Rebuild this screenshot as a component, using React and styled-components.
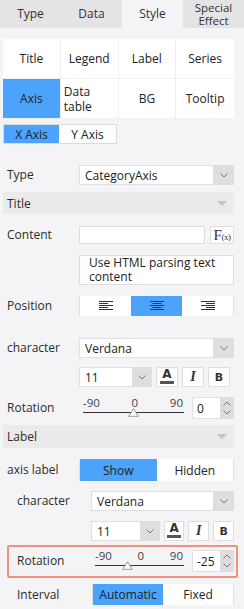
import styled, { createGlobalStyle } from "styled-components";

const GlobalStyle = createGlobalStyle`
  body {
    margin: 0;
    background: #f4f4f6;
    font-family: "Open Sans", "DejaVu Sans", sans-serif;
    font-size: 12px;
    color: #2b2b2b;
  }
  * { box-sizing: border-box; }
`;

const BLUE = "#4ba3fb";

function Chevron({ up }) {
  return (
    <svg width="8" height="5" viewBox="0 0 8 5">
      <polyline
        points={up ? "0.5,4.5 4,1 7.5,4.5" : "0.5,0.5 4,4 7.5,0.5"}
        fill="none"
        stroke="#777"
        strokeWidth="1"
      />
    </svg>
  );
}

function AlignIcon({ mode }) {
  const widths = [14, 9, 14, 9, 14];
  return (
    <svg width="14" height="10" viewBox="0 0 14 10">
      {widths.map((w, i) => {
        const x = mode === "left" ? 0 : mode === "right" ? 14 - w : (14 - w) / 2;
        return <rect key={i} x={x} y={i * 2} width={w} height="1" fill="#333" />;
      })}
    </svg>
  );
}

function Thumb() {
  return (
    <svg width="11" height="9" viewBox="0 0 11 9">
      <polygon points="5.5,0.8 10.3,8.3 0.7,8.3" fill="#fff" stroke="#999" strokeWidth="1" />
    </svg>
  );
}

function Slider({ value }) {
  const pct = ((value + 90) / 180) * 100;
  return (
    <SliderWrap>
      <Scale>
        <span>-90</span>
        <span>0</span>
        <span>90</span>
      </Scale>
      <Track />
      <ThumbHolder style={{ left: `${pct}%` }}>
        <Thumb />
      </ThumbHolder>
    </SliderWrap>
  );
}

function NumberBox({ value }) {
  return (
    <NumBox>
      <NumText>{value}</NumText>
      <Spinner>
        <Chevron up />
        <Chevron />
      </Spinner>
    </NumBox>
  );
}

function SelectBox({ value, arrowWidth, h }) {
  return (
    <Select $h={h}>
      <SelectText>{value}</SelectText>
      <SelectArrow $w={arrowWidth}>
        <Chevron />
      </SelectArrow>
    </Select>
  );
}

function FontTools({ indent, mt }) {
  return (
    <Row $mt={mt} $indent={indent}>
      <Label $indent={indent} />
      <SizeSelect>
        <SelectText>11</SelectText>
        <SelectArrow $w={20}>
          <Chevron />
        </SelectArrow>
      </SizeSelect>
      <ToolButton>
        <ColorA>
          A
          <ColorBar />
        </ColorA>
      </ToolButton>
      <ToolButton>
        <ItalicI>I</ItalicI>
      </ToolButton>
      <ToolButton>
        <BoldB>B</BoldB>
      </ToolButton>
    </Row>
  );
}

export default function App() {
  return (
    <Page>
      <GlobalStyle />
      <Tabs>
        <Tab>Type</Tab>
        <Tab>Data</Tab>
        <Tab $active>Style</Tab>
        <Tab>
          <TabLines>
            <span>Special</span>
            <span>Effect</span>
          </TabLines>
        </Tab>
      </Tabs>

      <Panel>
        <CategoryGrid>
          <Category>Title</Category>
          <Category>Legend</Category>
          <Category>Label</Category>
          <Category $last>Series</Category>
          <Category $active>Axis</Category>
          <Category>
            <span>Data table</span>
          </Category>
          <Category>BG</Category>
          <Category $last>Tooltip</Category>
        </CategoryGrid>

        <AxisSwitch>
          <AxisButton $w={55} $active>X Axis</AxisButton>
          <AxisButton $w={57}>Y Axis</AxisButton>
        </AxisSwitch>

        <Row $mt={21}>
          <Label>Type</Label>
          <SelectBox value="CategoryAxis" arrowWidth={21} />
        </Row>

        <Section $mt={7}>
          <span>Title</span>
          <Caret />
        </Section>

        <Row $mt={12}>
          <Label>Content</Label>
          <TextInput />
          <FxButton>
            F<small>(x)</small>
          </FxButton>
        </Row>

        <Row $mt={11}>
          <Label />
          <HtmlBox>Use HTML parsing text content</HtmlBox>
        </Row>

        <Row $mt={11}>
          <Label>Position</Label>
          <Segmented $h={20}>
            <Segment>
              <AlignIcon mode="left" />
            </Segment>
            <Segment $active>
              <AlignIcon mode="center" />
            </Segment>
            <Segment>
              <AlignIcon mode="right" />
            </Segment>
          </Segmented>
        </Row>

        <Row $mt={22}>
          <Label>character</Label>
          <SelectBox value="Verdana" arrowWidth={21} />
        </Row>

        <FontTools mt={9} />

        <Row $mt={10}>
          <Label>Rotation</Label>
          <Slider value={0} />
          <NumberBox value="0" />
        </Row>

        <Section $mt={6} $h={23}>
          <span>Label</span>
          <Caret />
        </Section>

        <Row $mt={11}>
          <Label>axis label</Label>
          <Segmented $h={22}>
            <Segment $active>Show</Segment>
            <Segment>Hidden</Segment>
          </Segmented>
        </Row>

        <Row $mt={10} $indent>
          <Label $indent>character</Label>
          <SelectBox value="Verdana" arrowWidth={21} />
        </Row>

        <FontTools indent mt={10} />

        <Highlight>
          <Label $indent>Rotation</Label>
          <Slider value={-25} />
          <NumberBox value="-25" />
        </Highlight>

        <Row $mt={6} $indent>
          <Label $indent>Interval</Label>
          <Segmented $h={21} $ml={1}>
            <Segment $active>Automatic</Segment>
            <Segment>Fixed</Segment>
          </Segmented>
        </Row>
      </Panel>
    </Page>
  );
}

const Page = styled.div`
  width: 244px;
  min-height: 609px;
  background: #f4f4f6;
`;

const Tabs = styled.div`
  display: grid;
  grid-template-columns: repeat(4, 1fr);
  height: 28px;
  background: #e4e4e4;
`;

const Tab = styled.div`
  display: flex;
  align-items: center;
  justify-content: center;
  text-align: center;
  font-size: 12px;
  line-height: 14px;
  color: #333;
  background: ${(p) => (p.$active ? "#f4f4f6" : "transparent")};
`;

const TabLines = styled.div`
  display: flex;
  flex-direction: column;
  align-items: center;
  font-size: 11.5px;
  line-height: 13px;
`;

const Panel = styled.div`
  padding: 0 10px 4px 3px;
`;

const CategoryGrid = styled.div`
  margin-top: 11px;
  display: grid;
  grid-template-columns: repeat(4, 1fr);
  grid-auto-rows: 40px;
  background: #fff;
`;

const Category = styled.div`
  display: flex;
  align-items: center;
  justify-content: center;
  padding: 0 3px;
  line-height: 15px;
  font-size: 12px;
  color: #222;
  border-right: ${(p) => (p.$last ? "none" : "1px solid #eeeeee")};
  border-bottom: 1px solid #eeeeee;
  background: ${(p) => (p.$active ? BLUE : "#fff")};
`;

const AxisSwitch = styled.div`
  margin-top: 5px;
  display: inline-flex;
  border: 1px solid #dcdcdc;
  height: 20px;
`;

const AxisButton = styled.div`
  width: ${(p) => p.$w}px;
  display: flex;
  align-items: center;
  justify-content: center;
  font-size: 12px;
  background: ${(p) => (p.$active ? BLUE : "#fff")};
  color: #222;
`;

const Row = styled.div`
  display: flex;
  align-items: center;
  margin-top: ${(p) => p.$mt}px;
  padding-left: ${(p) => (p.$indent ? 14 : 4)}px;
`;

const Label = styled.div`
  width: ${(p) => (p.$indent ? 74 : 72)}px;
  flex-shrink: 0;
  font-size: 12px;
  line-height: 14px;
  color: #2b2b2b;
`;

const Select = styled.div`
  flex: 1;
  display: flex;
  height: ${(p) => p.$h || 20}px;
  background: #fff;
  border: 1px solid #e0e0e0;
`;

const SelectText = styled.div`
  flex: 1;
  display: flex;
  align-items: center;
  padding-left: 5px;
  font-size: 12px;
  color: #222;
`;

const SelectArrow = styled.div`
  width: ${(p) => p.$w}px;
  display: flex;
  align-items: center;
  justify-content: center;
  background: #dedede;
  margin: -1px -1px -1px 0;
`;

const Section = styled.div`
  margin-top: ${(p) => p.$mt}px;
  height: ${(p) => p.$h || 22}px;
  display: flex;
  align-items: center;
  justify-content: space-between;
  padding: 0 7px 0 4px;
  background: #ebebeb;
  font-size: 12px;
  color: #2b2b2b;
`;

const Caret = styled.span`
  width: 0;
  height: 0;
  border-left: 5px solid transparent;
  border-right: 5px solid transparent;
  border-top: 5px solid #c4c4c4;
`;

const TextInput = styled.div`
  flex: 1;
  height: 18px;
  background: #fff;
  border: 1px solid #dedede;
`;

const FxButton = styled.div`
  width: 24px;
  height: 18px;
  margin-left: 5px;
  display: flex;
  align-items: center;
  justify-content: center;
  background: #fff;
  border: 1px solid #dedede;
  font-family: "Liberation Serif", "DejaVu Serif", serif;
  font-size: 15px;
  color: #333;
  letter-spacing: -0.5px;

  small {
    font-size: 9px;
    margin-top: 3px;
  }
`;

const HtmlBox = styled.div`
  flex: 1;
  height: 30px;
  padding: 0 4px 0 9px;
  display: flex;
  align-items: center;
  line-height: 14px;
  background: #fff;
  border: 1px solid #dedede;
  font-size: 12px;
  color: #222;
`;

const Segmented = styled.div`
  flex: 1;
  display: flex;
  height: ${(p) => p.$h}px;
  margin-left: ${(p) => p.$ml || 0}px;
  border: 1px solid #e0e0e0;
  background: #fff;
`;

const Segment = styled.div`
  flex: 1;
  display: flex;
  align-items: center;
  justify-content: center;
  font-size: 12px;
  color: #222;
  background: ${(p) => (p.$active ? BLUE : "#fff")};
  margin: -1px 0;
`;

const SizeSelect = styled.div`
  width: 73px;
  height: 20px;
  display: flex;
  background: #fff;
  border: 1px solid #e0e0e0;
`;

const ToolButton = styled.div`
  width: 22px;
  height: 20px;
  margin-left: 4px;
  display: flex;
  align-items: center;
  justify-content: center;
  background: #fff;
  border: 1px solid #dedede;
  color: #333;
`;

const ColorA = styled.div`
  display: flex;
  flex-direction: column;
  align-items: center;
  font-family: "DejaVu Sans", sans-serif;
  font-weight: bold;
  font-size: 12px;
  line-height: 11px;
  margin-top: -1px;
`;

const ColorBar = styled.div`
  width: 14px;
  height: 3px;
  margin-top: 1px;
  background: #555;
`;

const ItalicI = styled.span`
  font-family: "Liberation Serif", serif;
  font-style: italic;
  font-weight: bold;
  font-size: 14px;
`;

const BoldB = styled.span`
  font-family: "DejaVu Sans", sans-serif;
  font-weight: bold;
  font-size: 11px;
`;

const SliderWrap = styled.div`
  position: relative;
  flex: 1;
  margin-left: 4px;
  height: 22px;
`;

const Scale = styled.div`
  display: flex;
  justify-content: space-between;
  font-size: 11.5px;
  line-height: 12px;
  color: #444;
  padding-right: 1px;
`;

const Track = styled.div`
  height: 1px;
  margin-top: 3px;
  background: #333;
`;

const ThumbHolder = styled.div`
  position: absolute;
  top: 11px;
  margin-left: -5.5px;
  display: flex;
`;

const NumBox = styled.div`
  width: 42px;
  height: 22px;
  margin-left: 8px;
  display: flex;
  background: #fff;
  border: 1px solid #e0e0e0;
  flex-shrink: 0;
`;

const NumText = styled.div`
  flex: 1;
  display: flex;
  align-items: center;
  padding-left: 4px;
  font-size: 12px;
  color: #222;
`;

const Spinner = styled.div`
  width: 14px;
  margin: -1px -1px -1px 0;
  display: flex;
  flex-direction: column;
  align-items: center;
  justify-content: center;
  gap: 4px;
  background: #dedede;
`;

const Highlight = styled.div`
  display: flex;
  align-items: center;
  margin: 4px -4px 0 4px;
  padding: 3px 2px 4px 8px;
  border: 2px solid #f3917f;
  border-radius: 2px;
`;
